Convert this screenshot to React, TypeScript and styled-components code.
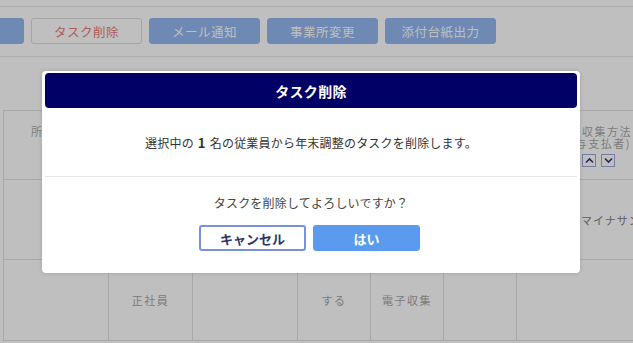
import styled, { createGlobalStyle } from 'styled-components';

const GlobalStyle = createGlobalStyle`
  * { box-sizing: border-box; }
  html, body {
    margin: 0;
    padding: 0;
    background: #fff;
    overflow: hidden;
  }
  body {
    font-family: "Noto Sans CJK JP", "Noto Sans", sans-serif;
  }
`;

const Page = styled.div`
  position: relative;
  width: 633px;
  height: 343px;
  overflow: hidden;
  background: #fff;
`;

const TopStrip = styled.div`
  height: 7px;
  border-bottom: 1px solid #e8e8e8;
`;

const Toolbar = styled.div`
  display: flex;
  gap: 7px;
  height: 50px;
  padding-top: 11px;
  margin-left: -87px;
  border-bottom: 1px solid #e8e8e8;
`;

const ToolButton = styled.button<{ $variant?: 'danger' }>`
  width: 111px;
  height: 26px;
  border-radius: 3px;
  font-family: inherit;
  font-size: 12.5px;
  letter-spacing: 0.5px;
  cursor: pointer;
  border: 1px solid ${({ $variant }) => ($variant === 'danger' ? '#dcdcdc' : '#93b7f0')};
  background: ${({ $variant }) => ($variant === 'danger' ? '#fff' : '#93b7f0')};
  color: ${({ $variant }) => ($variant === 'danger' ? '#e87a7a' : '#fff')};
`;

const FilterArea = styled.div`
  height: 53px;
`;

const Grid = styled.div`
  display: grid;
  grid-template-columns: 105px 84px 105px 73px 73px 73px 156px;
  grid-template-rows: 69px 80px 81px;
  margin-left: 3px;
  width: 680px;
  border-top: 1px solid #e2e2e2;
  border-left: 1px solid #e2e2e2;
`;

const Cell = styled.div<{ $start?: boolean }>`
  display: flex;
  flex-direction: column;
  align-items: ${({ $start }) => ($start ? 'flex-start' : 'center')};
  justify-content: center;
  padding-left: ${({ $start }) => ($start ? '64px' : '0')};
  border-right: 1px solid #e2e2e2;
  border-bottom: 1px solid #e2e2e2;
  font-size: 11px;
  letter-spacing: 1.5px;
  color: #a6a6a6;
  white-space: nowrap;
  overflow: hidden;
`;

const HeadCell = styled(Cell)`
  justify-content: flex-start;
  padding-top: 14px;
`;

const HeadLine = styled.div`
  height: 12px;
  line-height: 12px;
`;

const DarkText = styled.span`
  color: #808080;
  letter-spacing: 1px;
`;

const SortRow = styled.div`
  display: flex;
  gap: 5px;
  margin-top: 5px;
  margin-left: 8px;
`;

const SortButton = styled.span`
  width: 14px;
  height: 13px;
  border: 1px solid #9aa6dc;
  background: #fff;
  display: flex;
  align-items: center;
  justify-content: center;
`;

const Overlay = styled.div`
  position: absolute;
  inset: 0;
  background: rgba(0, 0, 0, 0.25);
  padding: 71px 0 0 42px;
`;

const Modal = styled.div`
  width: 538px;
  background: #fff;
  border-radius: 4px;
  padding: 2px 3px 22px;
  box-shadow: 0 0 4px rgba(0, 0, 0, 0.15);
`;

const ModalHeader = styled.div`
  height: 35px;
  border-radius: 4px;
  background: #000066;
  color: #fff;
  font-size: 14px;
  font-weight: bold;
  display: flex;
  align-items: center;
  justify-content: center;
  letter-spacing: 0.3px;
`;

const Message = styled.div`
  height: 69px;
  display: flex;
  align-items: center;
  justify-content: center;
  border-bottom: 1px solid #e6e6e6;
  font-size: 12px;
  color: #333;
  letter-spacing: 0.2px;
`;

const Count = styled.b`
  margin: 0 4px;
  font-size: 13px;
`;

const Confirm = styled.div`
  display: flex;
  flex-direction: column;
  align-items: center;
  padding-top: 17px;
  gap: 13px;
`;

const Question = styled.div`
  font-size: 12px;
  line-height: 18px;
  color: #444;
  letter-spacing: 0.2px;
`;

const ButtonRow = styled.div`
  display: flex;
  gap: 7px;
  margin-left: -3px;
`;

const DialogButton = styled.button<{ $primary?: boolean }>`
  width: 107px;
  height: 26px;
  border-radius: 3px;
  font-family: inherit;
  font-size: 13px;
  font-weight: bold;
  cursor: pointer;
  border: ${({ $primary }) => ($primary ? '1px solid #5a9bf0' : '2px solid #7b90dc')};
  background: ${({ $primary }) => ($primary ? '#5a9bf0' : '#fff')};
  color: ${({ $primary }) => ($primary ? '#fff' : '#333366')};
`;

const Chevron = ({ up }: { up?: boolean }) => (
  <svg width="9" height="7" viewBox="0 0 9 7">
    <path
      d={up ? 'M1 5.5 L4.5 2 L8 5.5' : 'M1 1.5 L4.5 5 L8 1.5'}
      fill="none"
      stroke="#333377"
      strokeWidth="1.6"
    />
  </svg>
);

export default function App() {
  return (
    <Page>
      <GlobalStyle />
      <TopStrip />
      <Toolbar>
        <ToolButton>一括登録</ToolButton>
        <ToolButton $variant="danger">タスク削除</ToolButton>
        <ToolButton>メール通知</ToolButton>
        <ToolButton>事業所変更</ToolButton>
        <ToolButton>添付台紙出力</ToolButton>
      </Toolbar>
      <FilterArea />
      <Grid>
        <HeadCell><HeadLine>所属部署</HeadLine></HeadCell>
        <HeadCell />
        <HeadCell />
        <HeadCell />
        <HeadCell />
        <HeadCell />
        <HeadCell>
          <HeadLine>書類収集方法</HeadLine>
          <HeadLine>(給与支払者)</HeadLine>
          <SortRow>
            <SortButton><Chevron up /></SortButton>
            <SortButton><Chevron /></SortButton>
          </SortRow>
        </HeadCell>

        <Cell />
        <Cell />
        <Cell />
        <Cell />
        <Cell />
        <Cell />
        <Cell $start><DarkText>マイナサンプル</DarkText></Cell>

        <Cell />
        <Cell>正社員</Cell>
        <Cell />
        <Cell>する</Cell>
        <Cell>電子収集</Cell>
        <Cell />
        <Cell />
      </Grid>

      <Overlay>
        <Modal>
          <ModalHeader>タスク削除</ModalHeader>
          <Message>
            選択中の<Count>1</Count>名の従業員から年末調整のタスクを削除します。
          </Message>
          <Confirm>
            <Question>タスクを削除してよろしいですか？</Question>
            <ButtonRow>
              <DialogButton>キャンセル</DialogButton>
              <DialogButton $primary>はい</DialogButton>
            </ButtonRow>
          </Confirm>
        </Modal>
      </Overlay>
    </Page>
  );
}
